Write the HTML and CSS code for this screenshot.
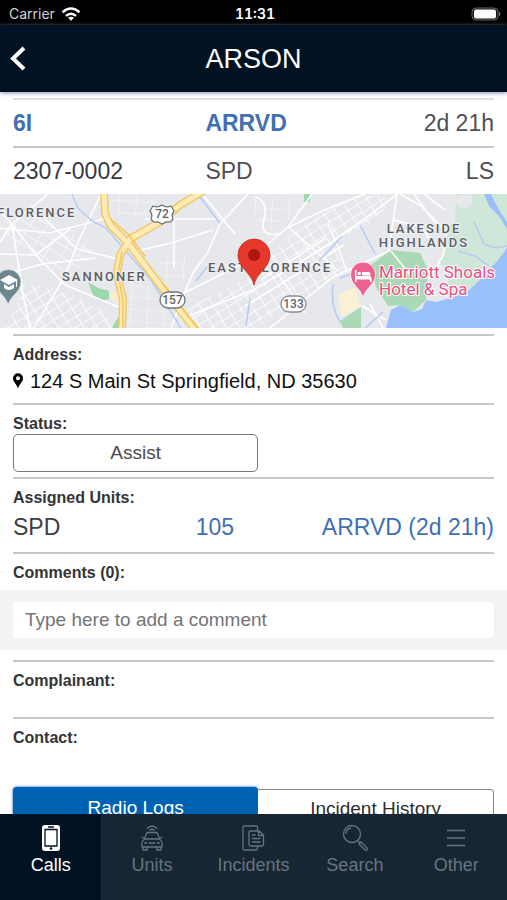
FILE: index.html
```html
<!DOCTYPE html>
<html lang="en">
<head>
<meta charset="utf-8">
<meta name="viewport" content="width=device-width, initial-scale=1">
<title>Arson</title>
<link rel="stylesheet" href="styles.css">
</head>
<body>
<div class="screen">
  <div class="status-bar">
    <div class="carrier">
      <span>Carrier</span>
      <svg width="20" height="14" viewBox="0 0 20 14" fill="none" stroke="#fff" stroke-width="2.500"><path d="M1.500 5.200Q10-2.200 18.500 5.200M5 8.900Q10 4.600 15 8.900"/><path d="M10 13.800 7 10.800Q10 8.700 13 10.800Z" fill="#fff" stroke="none"/></svg>
    </div>
    <time class="clock">11:31</time>
    <svg class="battery" width="30" height="14" viewBox="0 0 30 14"><rect x="1" y="1" width="26" height="12" rx="4" fill="#111" stroke="#666"/><rect x="3" y="2.500" width="22" height="9" rx="2" fill="#fff"/><path d="M28 4.500q3 2.500 0 5z" fill="#777"/></svg>
  </div>
  <header class="title-bar">
    <button class="back" aria-label="Back">
      <svg width="18" height="26" viewBox="0 0 18 26" fill="none" stroke="#fff" stroke-width="4"><path d="M14 2 3 12.500l11 10.500"/></svg>
    </button>
    <h1>ARSON</h1>
  </header>

  <main class="content">
    <section class="call-row call-row-status">
      <strong>6I</strong><strong>ARRVD</strong><span class="end">2d 21h</span>
    </section>
    <section class="call-row">
      <span class="dark">2307-0002</span><span>SPD</span><span class="end">LS</span>
    </section>

    <svg class="map" viewBox="0 0 507 134" preserveAspectRatio="xMidYMid slice" role="img" aria-label="Map">
      <defs>
        <pattern id="blocks" width="11" height="9" patternUnits="userSpaceOnUse" patternTransform="rotate(-32)"><path d="M0 0H11M0 0V9" stroke="#fff" stroke-width="1.600" fill="none"/></pattern>
        <pattern id="blocksWide" width="14" height="10" patternUnits="userSpaceOnUse" patternTransform="rotate(32)"><path d="M0 0H14M0 0V10" stroke="#f9fafb" stroke-width="1.300" fill="none"/></pattern>
        <pattern id="blocksSquare" width="17" height="12" patternUnits="userSpaceOnUse" patternTransform="rotate(3)"><path d="M0 0H17M0 0V12" stroke="#f8f9fa" stroke-width="1.200" fill="none"/></pattern>
      </defs>
      <rect width="507" height="134" fill="#e6e8eb"/>
      <path d="M456 0H507V54L498 66 483 83 466 99 446 101 449 80 438 66 449 50 444 38 455 27Z" fill="#cfe7d8"/>
      <path d="M457 2q-3 10 8 12 10-2 6-14z" fill="#e6e8eb"/>
      <path d="M371 71 391 56 420 59 428 76 426 106 413 118 400 111 388 112 376 93Z" fill="#a9d9b5"/>
      <path d="M340 127 361 113V134H343Z" fill="#a9d9b5"/>
      <path d="M304 0h6v8h-6z" fill="#9ed7ae"/>
      <path d="M338 101 356 93 361 112 341 123Z" fill="#faf1d5"/>
      <path d="M507 54 498 66 483 83 466 99 450 104 436 108 426 106 422 115 413 118 400 111 391 116 386 134H507Z" fill="#9ac0fb"/>
      <path d="M484 0 489 12 498 21 507 35V28L499 16 491 0Z" fill="#9ac0fb"/>
      <path d="M88 88 98 94 109 97V105L101 107 93 101Z" fill="#9bd8ac"/>
      <path d="M115 128 121 120V134H112Z" fill="#9bd8ac"/>
      <path d="M110 98 119 96 120 110 111 106Z" fill="#f5edcb"/>

      <path d="M4 24 38 18 70 38 94 53 84 73 63 82 42 69 17 57 4 40Z" fill="url(#blocksWide)"/>
      <path d="M20 90 52 94 78 105 108 118 112 134H5L17 110Z" fill="url(#blocks)"/>
      <path d="M127 74 155 99 188 134H129Z" fill="url(#blocksSquare)"/>
      <path d="M110 2H155V22H112Z" fill="url(#blocksSquare)"/>
      <path d="M157 60H185V86H166Z" fill="url(#blocksSquare)"/>
      <path d="M181 118 246 84 290 42 323 19 363 1 387 0 384 20 333 51 345 76 313 98 270 126 255 134H192Z" fill="url(#blocks)"/>
      <path d="M254 4H298L303 18 280 30 257 45Z" fill="url(#blocksSquare)"/>
      <path d="M425 60 447 60 451 84 432 88Z" fill="url(#blocksSquare)"/>

      <g fill="none" stroke="#fff" stroke-width="1.600">
        <path d="M0 17 12 30 36 61 65 91 126 116M101 0 79 46 64 84 34 134M0 48 12 30 48 0M12 30 23 100 30 134M0 34 50 39 96 27 113 22M0 82 42 70 96 64M30 11 77 55 118 65M0 60 36 61 70 35"/>
        <path d="M248 0 220 30 208 58 193 79 182 105 171 134M132 58 171 49 213 36M145 25H220M174 27V74M176 103 246 68 287 34 322 17 365 0M181 125 253 96 322 55 374 18 397 0M397 0 389 57 333 83 270 134M312 0 288 33 337 76M328 30 338 53 347 78M256 55 278 80 305 119M262 85 326 44M245 112 344 51"/>
        <path d="M400 0 421 12 447 38 443 62 429 83M394 26 421 33 432 48M424 0 445 16M414 0 435 29M255 3Q269 7 264 25T280 40M391 57 410 81M370 110 383 134M362 112 386 126M202 0 235 40"/>
      </g>
      <g fill="none" stroke="#b4cbf5" stroke-width="1.500">
        <path d="M72 0 78 14 92 27 106 34 124 55 151 86 181 134M200 3 220 29M319 67 335 50 342 42M360 31 375 60M333 90Q330 112 340 128M340 84 354 79 369 82M196 87 207 73M250 104 246 132"/>
        <path d="M474 28 484 50 496 54 507 52M458 57 475 62 489 72M383 118 365 134"/>
      </g>
      <g fill="none" stroke-linejoin="round" stroke-linecap="round">
        <path d="M202-2 180 11 163 26 130 45 120 61 117 80 123 106 122 136M104-2 105 20 111 32 128 49 157 87 197 138" stroke="#f4c768" stroke-width="8"/>
        <path d="M202-2 180 11 163 26 130 45 120 61 117 80 123 106 122 136M104-2 105 20 111 32 128 49 157 87 197 138" stroke="#feecb7" stroke-width="5"/>
        <path d="M113 27 128 40 145 62M122 57 118 80 123 106V134M162 89 199 136" stroke="#f7c64e" stroke-width="1.500"/>
      </g>

      <g class="map-shield">
        <path d="M153 12q5 2 9-1 4 3 9 1l3 5q-3 4-1 8-2 4-7 3l-4 2-4-2q-5 1-7-3 2-4-1-8z" fill="#fff" stroke="#70757b" stroke-width="1.300"/>
        <text x="162" y="24">72</text>
        <rect x="160" y="98" width="25" height="16" rx="8" fill="#fff" stroke="#70757b" stroke-width="1.300"/><text x="172.500" y="110">157</text>
        <rect x="281" y="102" width="25" height="16" rx="8" fill="#fff" stroke="#8a8d91" stroke-width="1.300"/><text x="293.500" y="114">133</text>
      </g>
      <g class="map-place">
        <text x="-3" y="23">FLORENCE</text>
        <text x="62" y="87">SANNONER</text>
        <text x="208" y="78">EAST FLORENCE</text>
        <text x="424" y="39" text-anchor="middle">LAKESIDE</text>
        <text x="424" y="53" text-anchor="middle">HIGHLANDS</text>
      </g>
      <g class="map-hotel"><text x="379" y="84">Marriott Shoals</text><text x="379" y="101">Hotel &amp; Spa</text></g>

      <path d="M8 111C6 101-4 99-4 88A12.500 12.500 0 0 1 21 88C21 98 11 101 8 111Z" fill="#6c8790" stroke="#e6edf0" stroke-width=".7"/>
      <path d="M0 86 9 81 18 86 9 91ZM4 90v4q5 4 10 0v-4l-5 3zM17 87v6h-1v-6z" fill="#fff"/>
      <path d="M363 104C361 94 350.500 91 350.500 80.500A12.500 12.500 0 0 1 375.500 80.500C375.500 91 365 94 363 104Z" fill="#ed6292" stroke="#fff" stroke-width=".8"/>
      <path d="M355 76h1.500v6H370a2.500 2.500 0 0 1 1.500 2v4H370v-2.500H356.500V88H355ZM362 78h6.500a2 2 0 0 1 2 2v1.500H362Z" fill="#fff"/>
      <circle cx="359.300" cy="79.500" r="1.700" fill="#fff"/>
      <path d="M254 91C252 79 238 74 238 61A16 16 0 0 1 270 61C270 74 256 79 254 91Z" fill="#e7382c" stroke="#bd2b20" stroke-width=".8"/>
      <circle cx="254" cy="61" r="6" fill="#ad1612"/>
    </svg>

    <section class="block block-address">
      <h2>Address:</h2>
      <p class="address">
        <svg width="10" height="16" viewBox="0 0 10 16"><path fill-rule="evenodd" d="M5 15.500C4 11.500 0 9 0 5.200A5 5 0 0 1 10 5.200C10 9 6 11.500 5 15.500ZM5 3.200A2 2 0 1 0 5 7.200 2 2 0 1 0 5 3.200Z"/></svg>
        <span>124 S Main St Springfield, ND 35630</span>
      </p>
    </section>
    <section class="block block-status">
      <h2>Status:</h2>
      <button class="status-button">Assist</button>
    </section>
    <section class="block block-units">
      <h2>Assigned Units:</h2>
      <div class="unit-row"><span>SPD</span><a href="#unit">105</a><a class="end" href="#status">ARRVD (2d 21h)</a></div>
    </section>
    <section class="block block-comments">
      <h2><label for="comment">Comments (0):</label></h2>
      <div class="comment-box"><input id="comment" type="text" placeholder="Type here to add a comment"></div>
    </section>
    <section class="block block-complainant"><h2>Complainant:</h2></section>
    <section class="block block-contact"><h2>Contact:</h2></section>
    <div class="segments">
      <button class="segment segment-active">Radio Logs</button>
      <button class="segment">Incident History</button>
    </div>
  </main>

  <nav class="tabs">
    <a class="tab tab-active" href="#calls">
      <svg viewBox="0 0 28 28" fill="none"><rect x="5" y="1" width="18" height="26" rx="3" fill="#fff"/><path d="M8 5.500H20V22H8ZM11 3H17" stroke="#011222" stroke-width="1.300"/><circle cx="14" cy="24.500" r="1.300" fill="#011222"/></svg>
      <span>Calls</span>
    </a>
    <a class="tab" href="#units">
      <svg viewBox="0 0 28 28" fill="none" stroke="currentColor" stroke-width="1.300"><path d="M9 4.500Q14-.5 19 4.500M11.500 6.500Q14 4 16.500 6.500M6.500 15 8.500 9.500Q9 8.500 10 8.500H18Q19 8.500 19.500 9.500L21.500 15M6.500 15H21.500Q24 16.500 24 19V23H4V19Q4 16.500 6.500 15ZM6 14 3.500 13M22 14 24.500 13M5 23V26H9V23M19 23V26H23V23M10.500 19H17.500"/><path d="M6.500 19H8.500M19.500 19H21.500" stroke-width="2"/></svg>
      <span>Units</span>
    </a>
    <a class="tab" href="#incidents">
      <svg viewBox="0 0 28 28" fill="none" stroke="currentColor" stroke-width="1.300"><path d="M18.500 22.500V24.500Q18.500 26 17 26H5.500Q4 26 4 24.500V3.500Q4 2 5.500 2H17Q18.500 2 18.500 3.500V6.500"/><path d="M11.500 7H20L24.500 11V20.500Q24.500 22 23 22H11.500Q10 22 10 20.500V8.500Q10 7 11.500 7ZM19.500 7V11.500H24.500M13 11H16.500M13 14.500H21.500M13 18H21.500"/></svg>
      <span>Incidents</span>
    </a>
    <a class="tab" href="#search">
      <svg viewBox="0 0 28 28" fill="none" stroke="currentColor" stroke-width="1.300"><circle cx="11" cy="10" r="8.500"/><path d="M5 10Q5 5 10 4M17 17 19 19M18 20 20 18 26 24Q27 27 24 26Z"/></svg>
      <span>Search</span>
    </a>
    <a class="tab" href="#other">
      <svg viewBox="0 0 28 28" fill="none" stroke="currentColor" stroke-width="1.600"><path d="M5 6.500H23M5 14H23M5 21.500H23"/></svg>
      <span>Other</span>
    </a>
  </nav>
</div>
</body>
</html>
```
FILE: styles.css
```css
* { box-sizing: border-box; }

body {
  margin: 0;
  background: #fff;
  color: #3e3e40;
  font-family: "Liberation Sans", Arial, sans-serif;
}

h1, h2, p { margin: 0; }
a { color: inherit; text-decoration: none; }
button, input { font: inherit; }
svg { display: block; }

.screen {
  display: flex;
  flex-direction: column;
  height: 100vh;
}

.status-bar {
  display: grid;
  grid-template-columns: 1fr auto 1fr;
  align-items: center;
  flex: none;
  height: 25px;
  padding: 2px 6px 0 9px;
  background: #000;
  color: #fff;
  font: 14px/20px Inter, sans-serif;
}
.carrier { display: flex; align-items: center; gap: 6px; color: #d2d2d2; }
.clock { font-weight: 600; font-feature-settings: "tnum"; }
.battery { justify-self: end; }

.title-bar {
  display: grid;
  grid-template-columns: 1fr auto 1fr;
  align-items: center;
  flex: none;
  height: 67px;
  padding: 0 10px;
  background: #011222;
  color: #fff;
  box-shadow: 0 1px 4px #8191ad;
  position: relative;
}
.title-bar h1 { font-size: 27px; line-height: 32px; font-weight: 400; }
.back { justify-self: start; padding: 0; border: 0; background: none; }

.content { flex: 1; min-height: 0; overflow: hidden; padding-top: 6px; }

.call-row {
  display: grid;
  grid-template-columns: 2fr 2fr 1fr;
  align-items: center;
  height: 48px;
  margin: 0 13px;
  border-top: 2px solid #c8c8ca;
  color: #505052;
  font-size: 23px;
  line-height: 28px;
  white-space: nowrap;
}
.call-row-status { border-top-color: #dedee2; }
.call-row strong { color: #3f70b3; }
.call-row .dark { color: #38383f; }
.end { text-align: right; }

.map { width: 100%; height: 134px; margin-bottom: 6px; font-family: Roboto, sans-serif; }
.map-place { fill: #5b5e64; font-size: 13px; font-weight: 500; letter-spacing: 2px; stroke: #eef0f2; stroke-width: 2px; paint-order: stroke; }
.map-shield { fill: #5f6368; font-size: 12px; font-weight: 500; text-anchor: middle; }
.map-hotel { fill: #e94d85; font-size: 17px; font-weight: 400; stroke: #fff; stroke-width: 2px; paint-order: stroke; }

.block { margin: 0 13px; padding-top: 10px; border-top: 2px solid #c8c8ca; }
.block h2 { color: #343436; font-size: 16px; line-height: 18px; font-weight: 700; }
.block-address { height: 69px; }
.address { display: flex; align-items: center; gap: 7px; margin-top: 5px; color: #111; font-size: 20px; line-height: 24px; white-space: nowrap; }
.block-status { height: 74px; }
.status-button {
  display: block;
  width: 51%;
  height: 38px;
  margin-top: 1px;
  padding: 0;
  border: 1px solid #77777a;
  border-radius: 5px;
  background: #fff;
  color: #4a4a4c;
  font-size: 19px;
}
.block-units { height: 75px; }
.unit-row {
  display: grid;
  grid-template-columns: 38% 16% 1fr;
  margin-top: 6px;
  font-size: 23px;
  line-height: 28px;
  white-space: nowrap;
}
.unit-row a { color: #3f70b3; }
.block-comments { height: 108px; }
.comment-box { margin: 8px -13px 0; padding: 12px 13px; background: #f2f3f5; }
.comment-box input {
  display: block;
  width: 100%;
  height: 36px;
  padding: 0 12px;
  border: 0;
  border-radius: 2px;
  background: #fff;
  color: #333;
  font-size: 19px;
}
.comment-box input::placeholder { color: #747476; opacity: 1; }
.block-complainant { height: 57px; }
.block-contact { height: 70px; }

.segments { display: grid; grid-template-columns: 51% 49%; align-items: start; margin: 0 13px; }
.segment {
  height: 40px;
  margin-top: 2px;
  padding: 0;
  border: 1px solid #88888a;
  border-left: 0;
  border-radius: 0 4px 4px 0;
  background: #fff;
  color: #2e2e30;
  font-size: 19px;
}
.segment-active {
  height: 42px;
  margin-top: 0;
  border: 0;
  border-radius: 4px;
  background: #0062b2;
  color: #fff;
  box-shadow: 0 0 3px #0062b2;
}

.tabs { display: grid; grid-template-columns: repeat(5, 1fr); flex: none; height: 86px; background: #162635; position: relative; }
.tab {
  display: flex;
  flex-direction: column;
  align-items: center;
  gap: 2px;
  padding-top: 10px;
  color: #68747e;
  font-size: 18px;
  line-height: 22px;
}
.tab svg { width: 28px; height: 28px; }
.tab-active { background: #011222; color: #fff; }
```
